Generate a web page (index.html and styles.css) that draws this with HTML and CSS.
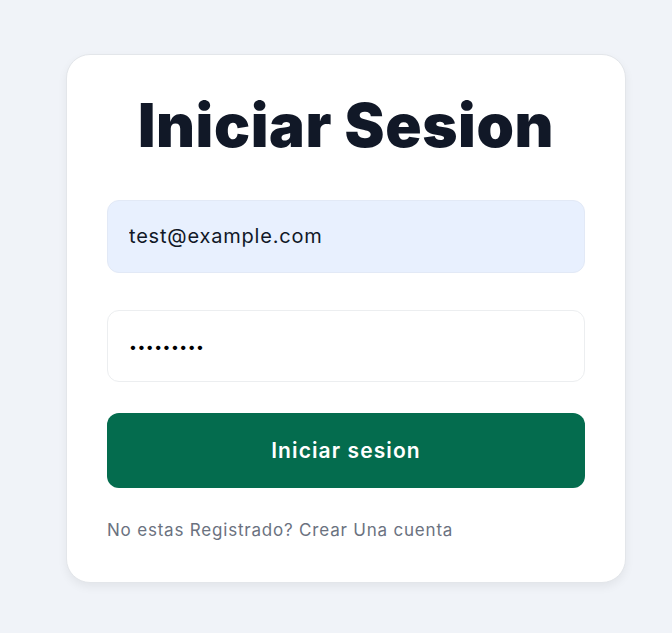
FILE: index.html
```html
<!DOCTYPE html>
<html lang="es">
<head>
<meta charset="utf-8">
<title>Iniciar Sesion</title>
<link rel="stylesheet" href="styles.css">
</head>
<body>
<main class="page">
  <form class="card">
    <h1 class="title">Iniciar Sesion</h1>
    <input class="field field-auto" type="email" value="test@example.com">
    <input class="field field-pass" type="password" value="123456789">
    <button class="btn" type="button">Iniciar sesion</button>
    <p class="foot">No estas Registrado? Crear Una cuenta</p>
  </form>
</main>
</body>
</html>
```
FILE: styles.css
```css
* { box-sizing: border-box; }
html, body { margin: 0; padding: 0; }
body {
  background: #f0f3f8;
  font-family: "Inter", "Lato", sans-serif;
  width: 672px;
  height: 633px;
  overflow: hidden;
}
.page {
  padding: 54px 46px 0 66px;
}
.card {
  width: 560px;
  height: 529px;
  background: #fff;
  border: 1px solid #e3e6ea;
  border-radius: 24px;
  box-shadow: 0 4px 10px rgba(0,0,0,0.06);
  padding: 40px 40px 40px 40px;
  display: flex;
  flex-direction: column;
}
.title {
  margin: 0 0 45px 0;
  height: 60px;
  line-height: 60px;
  font-size: 60px;
  font-weight: 900;
  color: #111827;
  text-align: center;
  letter-spacing: 0.6px;
}
.field {
  display: block;
  width: 100%;
  height: 73px;
  border: 1px solid #eceef0;
  border-radius: 12px;
  padding: 0 21px;
  font-family: inherit;
  font-size: 20px;
  letter-spacing: 0.8px;
  color: #111827;
  background: #fff;
  outline: none;
  margin: 0 0 37px 0;
}
.field-auto {
  background: #e8f0fe;
  border-color: #e2e9f6;
}
.field-pass {
  font-size: 14px;
  letter-spacing: 0.5px;
  color: #000;
  margin-bottom: 31px;
}
.btn {
  display: block;
  width: 100%;
  height: 75px;
  border: none;
  border-radius: 12px;
  background: #046c4e;
  color: #fff;
  font-family: inherit;
  font-size: 21px;
  font-weight: 600;
  letter-spacing: 1.1px;
}
.foot {
  margin: 30px 0 0 0;
  font-size: 17px;
  line-height: 24px;
  letter-spacing: 0.8px;
  color: #6b7280;
}
```
